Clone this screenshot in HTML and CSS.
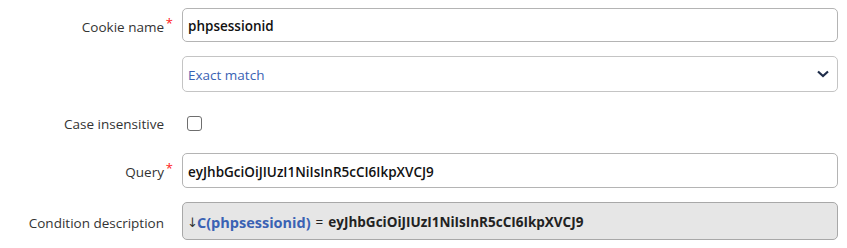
FILE: index.html
```html
<!DOCTYPE html>
<html>
<head>
<meta charset="utf-8">
<link rel="stylesheet" href="styles.css">
</head>
<body>
<form class="form">
  <div class="row row-name">
    <label class="label required">Cookie name</label>
    <div class="field"><div class="input">phpsessionid</div></div>
  </div>
  <div class="row row-select">
    <div class="label"></div>
    <div class="field">
      <div class="select">
        <span class="select-text">Exact match</span>
        <svg class="chevron" width="12" height="8" viewBox="0 0 12 8"><path d="M1 1.5 L6 6 L11 1.5" fill="none" stroke="#1f2d4a" stroke-width="2.2"/></svg>
      </div>
    </div>
  </div>
  <div class="row row-check">
    <label class="label">Case insensitive</label>
    <div class="field"><span class="checkbox"></span></div>
  </div>
  <div class="row row-query">
    <label class="label required">Query</label>
    <div class="field"><div class="input">eyJhbGciOiJIUzI1NiIsInR5cCI6IkpXVCJ9</div></div>
  </div>
  <div class="row row-desc">
    <label class="label">Condition description</label>
    <div class="field">
      <div class="desc"><span class="arrow">↓</span><span class="cname">C(phpsessionid)</span><span class="eq">=</span><span class="val">eyJhbGciOiJIUzI1NiIsInR5cCI6IkpXVCJ9</span></div>
    </div>
  </div>
</form>
</body>
</html>
```
FILE: styles.css
```css
html, body {
  margin: 0;
  padding: 0;
  background: #ffffff;
}
body {
  font-family: "Open Sans", "Noto Sans", sans-serif;
  font-size: 13.5px;
  color: #333333;
}
.form {
  display: flex;
  flex-direction: column;
  padding-top: 8px;
  width: 838px;
}
.row {
  display: flex;
  align-items: center;
}
.row-select { margin-top: 14px; }
.row-check { margin-top: 14px; height: 34px; }
.row-query { margin-top: 13px; }
.row-desc { margin-top: 14px; }
.label {
  width: 164px;
  flex: none;
  text-align: right;
  margin-right: 18px;
  position: relative;
  color: #333333;
  padding-top: 3px;
}
.row-check .label { padding-top: 1px; }
.required::after {
  content: "*";
  position: absolute;
  right: -9px;
  top: -1px;
  color: #ff2020;
  font-size: 13px;
}
.field {
  flex: 1;
  min-width: 0;
}
.input {
  box-sizing: border-box;
  height: 34px;
  border: 1px solid #b4b4b4;
  border-radius: 5px;
  padding: 2px 5px 0;
  display: flex;
  align-items: center;
  font-weight: 600;
  color: #111111;
}
.row-query .input { height: 35px; }
.select {
  box-sizing: border-box;
  height: 36px;
  border: 1px solid #c4c4c4;
  border-radius: 5px;
  padding: 2px 8px 0 5px;
  display: flex;
  align-items: center;
  justify-content: space-between;
}
.select-text {
  color: #3a62b4;
  font-weight: 500;
}
.chevron { display: block; margin-top: -2px; }
.checkbox {
  display: block;
  box-sizing: border-box;
  width: 15px;
  height: 15px;
  margin-left: 5px;
  border: 1px solid #6e6e6e;
  border-radius: 3px;
  background: #fff;
}
.desc {
  box-sizing: border-box;
  height: 38px;
  border: 1px solid #a8a8a8;
  border-radius: 5px;
  background: #e6e6e6;
  padding: 2px 5px 0;
  display: flex;
  align-items: center;
  white-space: nowrap;
}
.arrow {
  color: #333;
  font-family: "DejaVu Sans", sans-serif;
  font-size: 13px;
  margin-right: -1px;
  margin-left: -1px;
}
.cname {
  color: #3a62b4;
  font-weight: 700;
  font-size: 14.5px;
}
.eq { margin: 0 5px; color: #222; }
.val { font-weight: 700; color: #222; }
```
